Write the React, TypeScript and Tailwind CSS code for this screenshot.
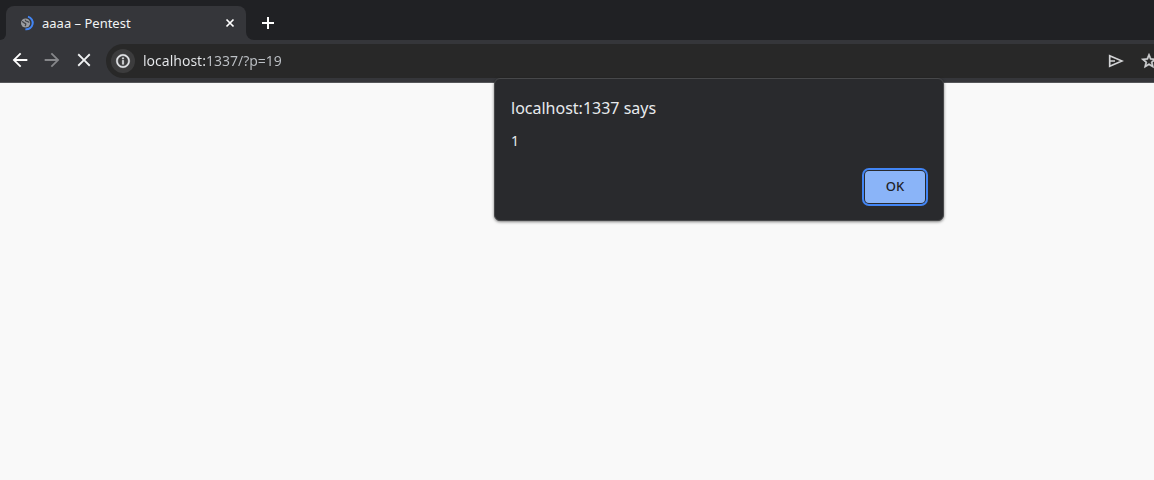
import type { ReactNode } from "react";

type IconProps = { children: ReactNode; className?: string };

function Icon({ children, className = "size-6" }: IconProps) {
  return (
    <svg viewBox="0 0 24 24" fill="currentColor" aria-hidden="true" className={`shrink-0 ${className}`}>
      {children}
    </svg>
  );
}

function LoadingFavicon() {
  return (
    <svg viewBox="0 0 16 16" aria-hidden="true" className="size-4 shrink-0">
      <circle cx="5.6" cy="8" r="4.6" fill="#9b9da1" />
      <path
        d="M2 6.600c1.300-.2 1.800 1.600 3.200 1.800 1 .2.600 1.600-.2 2.600M5.400 4.600c-.2 1.400 1 1.600 1.900 1.700.8.200.9.900 2 .8"
        fill="none"
        stroke="#44464a"
        strokeWidth="1.300"
      />
      <path d="M8 1.600a6.500 6.500 0 0 1-2.600 12.700" fill="none" stroke="#4285f4" strokeWidth="2" />
    </svg>
  );
}

function TabStrip() {
  return (
    <header className="flex h-10 items-end bg-[#202124]">
      <span className="h-2 w-1.5 shrink-0 overflow-hidden bg-[#35363a]">
        <span className="block h-2 w-full rounded-br-lg bg-[#202124]" />
      </span>
      <div className="flex h-[34px] w-60 shrink-0 items-center rounded-t-lg bg-[#35363a] pr-2 pl-3.5">
        <LoadingFavicon />
        <span className="ml-1.5 flex-1 truncate text-[13px] leading-4 text-[#f1f3f4]">aaaa – Pentest</span>
        <button type="button" aria-label="Close tab" className="grid size-4 place-items-center text-white">
          <svg viewBox="0 0 16 16" aria-hidden="true" className="size-4">
            <path d="m4.500 4.500 7 7m0-7-7 7" stroke="currentColor" strokeWidth="1.700" />
          </svg>
        </button>
      </div>
      <span className="h-2 w-2 shrink-0 overflow-hidden bg-[#35363a]">
        <span className="block h-2 w-full rounded-bl-lg bg-[#202124]" />
      </span>
      <button type="button" aria-label="New tab" className="grid h-[34px] w-7 place-items-center text-white">
        <svg viewBox="0 0 16 16" aria-hidden="true" className="size-4">
          <path d="M8 2v12M2 8h12" stroke="currentColor" strokeWidth="2" />
        </svg>
      </button>
    </header>
  );
}

function Toolbar() {
  return (
    <nav className="flex h-[43px] items-start overflow-hidden border-b border-[#56575a] bg-[#35363a] pt-1 pl-2">
      <div className="flex h-8 shrink-0 items-center gap-2">
        <button type="button" aria-label="Back" className="grid size-6 place-items-center text-white">
          <Icon className="size-[22px]">
            <path d="M20 11H7.830l5.590-5.590L12 4l-8 8 8 8 1.410-1.410L7.830 13H20v-2z" />
          </Icon>
        </button>
        <button type="button" aria-label="Forward" className="grid size-6 place-items-center text-[#86878a]">
          <Icon className="size-[22px]">
            <path d="m12 4-1.410 1.410L16.170 11H4v2h12.170l-5.580 5.590L12 20l8-8z" />
          </Icon>
        </button>
        <button type="button" aria-label="Stop loading" className="grid size-6 place-items-center text-[#f1f3f4]">
          <Icon className="size-[22px]">
            <path d="M19 6.410 17.590 5 12 10.590 6.410 5 5 6.410 10.590 12 5 17.590 6.410 19 12 13.410 17.590 19 19 17.590 13.410 12z" />
          </Icon>
        </button>
      </div>
      <div className="ml-2.5 flex h-[34px] min-w-0 flex-1 items-center rounded-l-full bg-[#282828] pl-[5px]">
        <button
          type="button"
          aria-label="View site information"
          className="grid size-6 shrink-0 place-items-center rounded-full bg-[#3c3c3d] text-[#e8eaed]"
        >
          <Icon className="size-4">
            <path d="M11 7h2v2h-2zm0 4h2v6h-2zm1-9C6.480 2 2 6.480 2 12s4.480 10 10 10 10-4.480 10-10S17.520 2 12 2zm0 18c-4.410 0-8-3.590-8-8s3.590-8 8-8 8 3.590 8 8-3.590 8-8 8z" stroke="currentColor" strokeWidth="0.700" />
          </Icon>
        </button>
        <input
          type="text"
          aria-label="Address"
          defaultValue="localhost:1337/?p=19"
          className="ml-2 h-6 min-w-0 flex-1 bg-linear-to-r from-[#e8eaed] from-[64px] to-[#bdc1c6] to-[64px] bg-clip-text pb-0.5 text-sm text-transparent caret-white outline-none"
        />
        <div className="-mr-1 flex shrink-0 items-center gap-4 text-[#d2d3d5]">
          <button type="button" aria-label="Share this page" className="grid size-4 place-items-center">
            <svg viewBox="0 0 16 16" fill="none" aria-hidden="true" className="size-4">
              <path d="M1.700 2.700v10.600L14 8zM2 8h5" stroke="currentColor" strokeWidth="1.700" />
            </svg>
          </button>
          <button type="button" aria-label="Bookmark this tab" className="grid size-[18px] place-items-center">
            <Icon className="size-[18px]">
              <path d="m22 9.240-7.190-.62L12 2 9.190 8.630 2 9.240l5.460 4.730L5.820 21 12 17.270 18.180 21l-1.630-7.030L22 9.240zM12 15.400l-3.760 2.270 1-4.280-3.320-2.880 4.380-.38L12 6.100l1.710 4.040 4.380.38-3.320 2.880 1 4.280L12 15.400z" stroke="currentColor" strokeWidth="0.800" />
            </Icon>
          </button>
        </div>
      </div>
    </nav>
  );
}

function AlertDialog() {
  return (
    <section
      role="alertdialog"
      aria-labelledby="alert-title"
      aria-describedby="alert-message"
      className="absolute top-[78px] left-[494px] flex w-[450px] max-w-full flex-col rounded-md border border-[#47484a] bg-[#292a2d] px-4 pt-[18px] pb-[17px] text-[#e8eaed] shadow-[0_1px_3px_rgba(0,0,0,0.5)]"
    >
      <h1 id="alert-title" className="text-base leading-[22px]">localhost:1337 says</h1>
      <p id="alert-message" className="mt-3 text-sm leading-5">1</p>
      <button
        type="button"
        autoFocus
        className="mt-5 mr-0.5 h-8 w-[60px] self-end rounded-sm bg-[#8ab4f8] text-[13px] font-medium text-[#202124] ring-2 ring-[#4285f4] ring-offset-1 ring-offset-[#292a2d] outline-none"
      >
        OK
      </button>
    </section>
  );
}

export default function App() {
  return (
    <div className="relative min-h-screen overflow-hidden bg-[#f9f9f9] font-['Noto_Sans',sans-serif]">
      <TabStrip />
      <Toolbar />
      <main />
      <AlertDialog />
    </div>
  );
}
